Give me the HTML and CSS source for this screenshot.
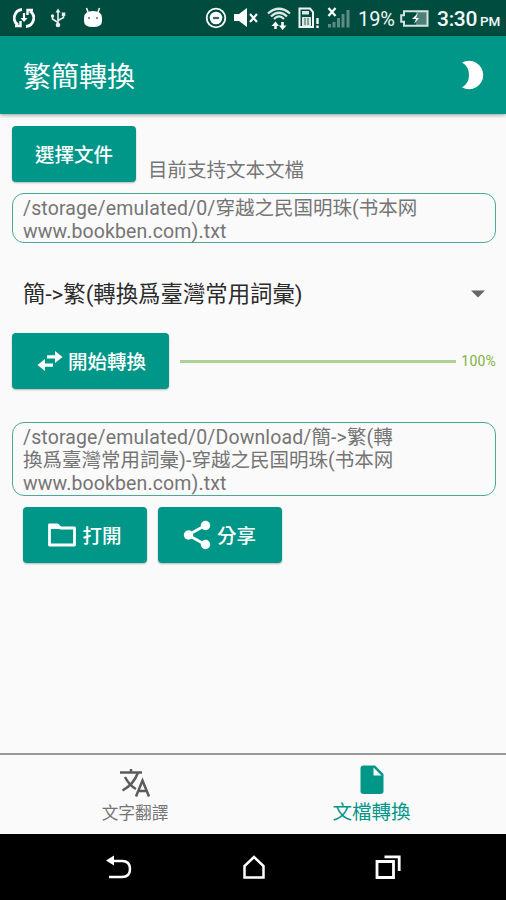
FILE: index.html
```html
<!DOCTYPE html>
<html lang="zh-Hant">
<head>
<meta charset="utf-8">
<title>繁簡轉換</title>
<link rel="stylesheet" href="styles.css">
</head>
<body>
<div class="phone">
  <header class="status">
    <div class="status-left">
      <svg width="22" height="22" viewBox="0 0 22 22" fill="none" stroke="#fff" stroke-width="2.8"><path d="M9 2.500A8.500 8.500 0 0 0 5 18M13 19.500A8.500 8.500 0 0 0 17 4"/><path d="M2 19h5.500v-5M20 3h-5.500v5" stroke-width="2.400"/><path d="M11 6v7" stroke-width="2.200"/><path d="M7.500 11h7L11 15z" fill="#fff" stroke="none"/></svg>
      <svg class="usb" width="16" height="20" viewBox="0 0 16 20" fill="none" stroke="#e4efed" stroke-width="1.6"><path d="M8 3v14M2.500 8v3L8 14.500M13.500 6v3.500L8 12.500"/><path d="M5.500 4.500 8 .500l2.500 4z" fill="#e4efed" stroke="none"/><circle cx="8" cy="17" r="2.300" fill="#e4efed" stroke="none"/><circle cx="2.500" cy="8" r="1.700" fill="#e4efed" stroke="none"/><path d="M11.800 4.500h3.500v3.500h-3.500z" fill="#e4efed" stroke="none"/></svg>
      <svg width="20" height="22" viewBox="0 0 20 22"><path d="M5 5 3.500 1M15 5l1.500-4" stroke="#fff" stroke-width="1.500"/><path d="M1 11Q1 4 10 4t9 7v3q0 6-9 6t-9-6z" fill="#fff"/><circle cx="6" cy="11" r="1" fill="#52766f"/><circle cx="14" cy="11" r="1" fill="#52766f"/></svg>
    </div>
    <div class="status-right">
      <svg width="22" height="22" viewBox="0 0 22 22"><circle cx="11" cy="11" r="9.300" fill="none" stroke="#fff" stroke-width="1.800"/><circle cx="11" cy="11" r="6.300" fill="#fff"/><path d="M8 11h6" stroke="#39665e" stroke-width="2.200"/></svg>
      <svg class="mute" width="24" height="20" viewBox="0 0 24 20"><path d="M0 6h5l8-6v19l-8-6H0z" fill="#fff"/><path d="m16 6 7 8m0-8-7 8" stroke="#fff" stroke-width="2.200"/></svg>
      <svg class="wifi" width="24" height="24" viewBox="0 0 24 24" fill="none" stroke="#dce9e6" stroke-width="2.2"><path d="M1 6.500Q12-3 23 6.500M4 9.500Q12 2 20 9.500M7 12Q12 7 17 12"/><path d="M8.500 22v-4M15.500 15v4" stroke="#fff" stroke-width="2.500"/><path d="m4.500 19 4-4.500 3.500 4.500zM12 18.500h7.500l-4 4.500z" fill="#fff" stroke="none"/></svg>
      <svg class="sim" width="22" height="22" viewBox="0 0 22 22"><path d="M1.500 1.500H12L15 5v15H1.500z" fill="none" stroke="#f0f6f5" stroke-width="2"/><path d="M4 4h7v3.500H4zM4 10h9v9H4z" fill="#dce7e5"/><path d="M7 11v7M10 11v7" stroke="#345f57"/><path d="M19.500 11v6M19.500 18.500V21" stroke="#fff" stroke-width="2.300"/></svg>
      <svg class="signal" width="24" height="22" viewBox="0 0 24 22"><path d="M2.500 17v3.500M7 15v5.500M11.500 11v9.500M16 7v13.500M21 3v17.500" stroke="#5d8c84" stroke-width="3"/><path d="m1.500 1 7 8m0-8-7 8" stroke="#fff" stroke-width="2.200"/></svg>
      <span class="percent">19%</span>
      <svg class="battery" width="29" height="17" viewBox="0 0 29 17"><path d="M16 2h11v13H16z" fill="#4d817a"/><path d="M4 1.200h23.500v14.600H4v-4H1.200V5.200H4z" fill="none" stroke="#d5e2df" stroke-width="2"/><path d="m18 3-6 6h4l-2 5 5-6h-3z" fill="#fff"/></svg>
      <span class="clock">3:30</span><span class="pm">PM</span>
    </div>
  </header>
  <div class="appbar">
    <h1>繁簡轉換</h1>
    <svg width="24" height="30" viewBox="0 0 24 30"><path d="M1 2.500A14.300 14.300 0 1 1 1 27.500Q8 23.500 8 15T1 2.500z" fill="#fff"/></svg>
  </div>
  <main>
    <div class="choose"><button class="btn"><span>選擇文件</span></button><span class="hint">目前支持文本文檔</span></div>
    <div class="path">/storage/emulated/0/<span class="han">穿越之民国明珠</span>(<span class="han">书本网</span><br>www.bookben.com).txt</div>
    <div class="select"><span>簡-&gt;繁(轉換爲臺灣常用詞彙)</span><svg width="14" height="8" viewBox="0 0 14 8"><path d="M0 .5h14L7 7.500z" fill="#666"/></svg></div>
    <div class="convert">
      <button class="btn wide"><svg width="26" height="20" viewBox="0 0 26 20"><path d="M10 4.200h8V0l7.500 6-7.500 6V7.500h-8zM16 12.500H8V8L.500 14 8 20v-4.200h8z" fill="#fff"/></svg><span>開始轉換</span></button>
      <div class="bar"></div><span class="done">100%</span>
    </div>
    <div class="path result">/storage/emulated/0/Download/<span class="han">簡</span>-&gt;<span class="han">繁</span>(<span class="han">轉</span><br><span class="han">換爲臺灣常用詞彙</span>)-<span class="han">穿越之民国明珠</span>(<span class="han">书本网</span><br>www.bookben.com).txt</div>
    <div class="actions">
      <button class="btn"><svg width="30" height="26" viewBox="0 0 30 26"><path d="M2.500 3h8l3 3h14v17h-25z" fill="none" stroke="#fff" stroke-width="2.800" stroke-linejoin="round"/><path d="M2 3h9l3 4H2z" fill="#fff"/></svg><span>打開</span></button>
      <button class="btn share"><svg width="28" height="30" viewBox="0 0 28 30"><path d="M23 5 5 15l18 10" fill="none" stroke="#fff" stroke-width="2.800"/><g fill="#fff"><circle cx="22.500" cy="5.500" r="4.700"/><circle cx="5.500" cy="15" r="4.700"/><circle cx="22.500" cy="24.500" r="4.700"/></g></svg><span>分享</span></button>
    </div>
  </main>
  <nav class="tabs">
    <div class="tab"><svg width="32" height="30" viewBox="0 0 32 30" fill="none" stroke="#5c5c5c" stroke-width="2.500"><path d="M1 4.500h22M12 1v3.500M19 4.500Q15 16 3.500 22.500M6 9q4 8 11 12"/><path d="m17 28.500 6.500-16 6.500 16M19.500 23h8"/></svg><span>文字翻譯</span></div>
    <div class="tab active"><svg width="24" height="30" viewBox="0 0 24 30"><path d="M3.500.500H15L23.500 9v17q0 3-3 3h-17q-3 0-3-3V3.500q0-3 3-3z" fill="#009688"/><path d="M13.500 2.500V10.500h8z" fill="#fafafa"/></svg><span>文檔轉換</span></div>
  </nav>
  <footer class="keys">
    <svg width="26" height="24" viewBox="0 0 26 24"><path d="M7 6h9q8 0 8 8t-8 8H3" fill="none" stroke="#fff" stroke-width="2.500"/><path d="m0 5.500 8-5v10z" fill="#fff"/></svg>
    <svg width="22" height="24" viewBox="0 0 22 24"><path d="M1.500 22.500V11L11 2l9.500 9v11.500z" fill="none" stroke="#fff" stroke-width="2.500"/></svg>
    <svg width="26" height="24" viewBox="0 0 26 24" fill="none" stroke="#fff" stroke-width="2.800"><path d="M2 6.500h16.500v16H2zM9.500 1.800h14.700V16"/></svg>
  </footer>
</div>
</body>
</html>
```

FILE: styles.css
```css
* { box-sizing: border-box; }
body { margin: 0; background: #fafafa; font-family: Roboto, "Noto Sans CJK TC", sans-serif; }
svg { display: block; flex: none; }
.phone { width: 506px; height: 900px; display: flex; flex-direction: column; overflow: hidden; }
.status { height: 36px; background: #004d40; color: #f2f8f7; display: flex; justify-content: space-between; align-items: center; padding: 0 6px 0 13px; }
.status-left, .status-right { display: flex; align-items: center; }
.usb { margin: 0 17px 0 15px; }
.mute { margin: 0 9px 0 7px; }
.wifi { margin-top: 1px; }
.sim { margin: 0 7px 0 7px; }
.percent { font-size: 20px; line-height: 24px; width: 38px; margin: 2px 0 0 7px; letter-spacing: -.1px; }
.battery { margin: 0 8px 0 4px; }
.clock { font-size: 21px; line-height: 24px; font-weight: 500; width: 41px; margin-top: 2px; letter-spacing: -.3px; }
.pm { font-size: 13.5px; font-weight: 500; width: 20px; margin: 5px 0 0 2px; }
.appbar { height: 78px; background: #009688; padding: 0 21px 0 23px; display: flex; align-items: center; justify-content: space-between; box-shadow: 0 1px 4px #0006; color: #fff; }
.appbar h1 { margin: 0; padding-top: 5px; font-size: 28px; font-weight: 400; line-height: 40px; }
main { flex: 1; padding: 12px 10px 0 12px; }
.btn { width: 124px; height: 56px; padding: 0; border: 0; border-radius: 4px; background: #009688; color: #fff; font: 500 19.5px/28px Roboto, "Noto Sans CJK TC", sans-serif; display: flex; align-items: center; justify-content: center; gap: 5px; box-shadow: 0 1px 2px #0004; }
.btn span { padding-top: 3px; }
.btn svg { margin-left: -1px; }
.choose { display: flex; height: 56px; align-items: flex-end; gap: 12px; }
.hint { font-size: 19.5px; line-height: 28px; color: #757575; margin-bottom: -3px; }
.path { height: 50px; margin-top: 11px; border: 1.5px solid #4caa94; border-radius: 12px; padding: 3px 10px; color: #757575; font-size: 19.5px; line-height: 23px; letter-spacing: .13px; white-space: nowrap; }
.han { letter-spacing: 0; }
.select { height: 56px; margin-top: 23px; padding: 0 11px; display: flex; align-items: center; justify-content: space-between; color: #2b2b2b; font-size: 22.4px; }
.select span { padding-bottom: 4px; }
.convert { height: 56px; margin-top: 11px; display: flex; align-items: center; }
.wide { width: 157px; padding-left: 3px; }
.bar { width: 277px; height: 3px; background: #aed094; margin: 0 5px 0 11px; }
.done { font-size: 14px; color: #7cb342; letter-spacing: .2px; }
.result { height: 74px; margin-top: 33px; }
.actions { display: flex; gap: 11px; margin: 11px 0 0 11px; }
.share { gap: 6px; }
.tabs { height: 81px; border-top: 2px solid #999; display: grid; grid-template-columns: 270px 203px; color: #757575; }
.tab { display: flex; flex-direction: column; align-items: center; padding-top: 13px; font-size: 16.7px; line-height: 24px; }
.tab svg + span { margin-top: 4px; }
.active { color: #009688; font-size: 19.5px; padding-top: 10px; }
.active svg + span { margin-top: 6px; }
.keys { height: 66px; background: #000; display: flex; align-items: center; justify-content: space-between; padding: 0 105px 0 106px; }
```
